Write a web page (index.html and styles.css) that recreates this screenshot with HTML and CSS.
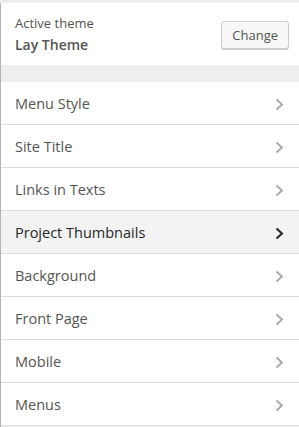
FILE: index.html
```html
<!DOCTYPE html>
<html lang="en">
<head>
  <meta charset="UTF-8">
  <meta name="viewport" content="width=device-width, initial-scale=1.0">
  <title>Customize</title>
  <link rel="stylesheet" href="styles.css">
</head>
<body>
  <div class="panel">
    <div class="theme-info">
      <div class="theme-text">
        <p class="theme-label">Active theme</p>
        <p class="theme-name">Lay Theme</p>
      </div>
      <button class="btn-change">Change</button>
    </div>
    <div class="spacer"></div>
    <ul class="sections">
      <li class="section">Menu Style <svg class="chev" viewBox="0 0 9 13"><polyline points="1.5,1.5 7,6.5 1.5,11.5"/></svg></li>
      <li class="section">Site Title <svg class="chev" viewBox="0 0 9 13"><polyline points="1.5,1.5 7,6.5 1.5,11.5"/></svg></li>
      <li class="section">Links in Texts <svg class="chev" viewBox="0 0 9 13"><polyline points="1.5,1.5 7,6.5 1.5,11.5"/></svg></li>
      <li class="section section--active">Project Thumbnails <svg class="chev" viewBox="0 0 9 13"><polyline points="1.5,1.5 7,6.5 1.5,11.5"/></svg></li>
      <li class="section">Background <svg class="chev" viewBox="0 0 9 13"><polyline points="1.5,1.5 7,6.5 1.5,11.5"/></svg></li>
      <li class="section">Front Page <svg class="chev" viewBox="0 0 9 13"><polyline points="1.5,1.5 7,6.5 1.5,11.5"/></svg></li>
      <li class="section">Mobile <svg class="chev" viewBox="0 0 9 13"><polyline points="1.5,1.5 7,6.5 1.5,11.5"/></svg></li>
      <li class="section">Menus <svg class="chev" viewBox="0 0 9 13"><polyline points="1.5,1.5 7,6.5 1.5,11.5"/></svg></li>
    </ul>
  </div>
</body>
</html>
```

FILE: styles.css
```css
body {
  margin: 0;
  font-family: "Open Sans", Arial, sans-serif;
  background-color: #eee;
  color: #555;
}

.panel {
  margin-top: 3px;
  border-left: 1px solid #b4b4b4;
  min-height: 424px;
  background-color: #eee;
}

.theme-info {
  display: flex;
  justify-content: space-between;
  align-items: center;
  background-color: #fff;
  padding: 0 10px 0 14px;
  height: 62px;
}

.theme-label {
  margin: 0;
  font-size: 13px;
  line-height: 18px;
}

.theme-name {
  margin: 3px 0 0;
  font-size: 14px;
  font-weight: 600;
  line-height: 20px;
}

.btn-change {
  font-family: inherit;
  font-size: 13px;
  color: #555;
  background-color: #f7f7f7;
  border: 1px solid #ccc;
  border-radius: 3px;
  box-shadow: 0 1px 0 #ccc;
  height: 28px;
  padding: 0 10px;
  margin-top: 1px;
}

.spacer {
  height: 17px;
}

.sections {
  list-style: none;
  margin: 0;
  padding: 0;
  background-color: #fff;
}

.section {
  display: flex;
  justify-content: space-between;
  align-items: center;
  height: 42px;
  padding: 0 15px 0 14px;
  border-bottom: 1px solid #ddd;
  font-size: 14.5px;
}

.section--active {
  background-color: #f3f3f3;
  color: #23282d;
}

.chev {
  width: 9px;
  height: 13px;
  margin-top: 3px;
  fill: none;
  stroke: #a0a5aa;
  stroke-width: 1.7;
}

.section--active .chev {
  stroke: #23282d;
  stroke-width: 2.1;
}
```
